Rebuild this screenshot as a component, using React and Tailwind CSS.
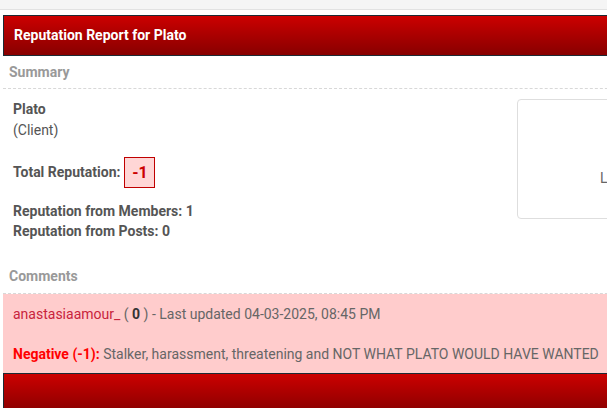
import React from "react";

const Bar = ({ children }) => (
  <div className="h-[41px] border-t border-l border-b border-[#1c2a33] bg-gradient-to-b from-[#cc0000] to-[#880000] flex items-center pl-[10px]">
    {children}
  </div>
);

export default function App() {
  return (
    <div className="w-[607px] h-[408px] overflow-hidden bg-white font-['Roboto',sans-serif] text-[14px] text-[#555]">
      <div className="h-[10px] bg-[#f5f5f5] border-b border-[#e2e2e2]" />
      <div className="w-[640px] ml-[3px] mt-[5px]">
        <Bar>
          <span className="text-white font-bold text-[14px]">Reputation Report for Plato</span>
        </Bar>

        <div className="h-[33px] flex items-center pl-[6px] border-b border-dashed border-[#d8d8d8]">
          <span className="font-bold text-[#999]">Summary</span>
        </div>

        <div className="flex">
          <div className="flex-1 pl-[10px] pt-[10px]">
            <div className="font-bold leading-[21px]">Plato</div>
            <div className="leading-[21px]">(Client)</div>
            <div className="flex items-center mt-[16px] gap-[4px]">
              <span className="font-bold">Total Reputation:</span>
              <span className="w-[31px] h-[31px] border border-[#c00000] bg-[#ffd6d6] text-[#cc0000] font-bold text-[16px] flex items-center justify-center">
                -1
              </span>
            </div>
            <div className="mt-[13px] font-bold leading-[20px]">Reputation from Members: 1</div>
            <div className="font-bold leading-[20px]">Reputation from Posts: 0</div>
          </div>
          <div className="w-[126px] h-[120px] mt-[10px] border border-[#dedede] rounded-[4px] flex items-center pl-[82px] pt-[38px] overflow-hidden">
            <span className="text-[#666]">Loading</span>
          </div>
        </div>

        <div className="h-[34px] mt-[19px] flex items-center pl-[6px] border-b border-dashed border-[#d8d8d8]">
          <span className="font-bold text-[#999]">Comments</span>
        </div>

        <div className="bg-[#ffcccc] h-[79px] pl-[10px] pt-[10px]">
          <div className="leading-[20px] text-[#666]">
            <span className="text-[#c8233c]">anastasiaamour_</span> ( <b className="text-[#333]">0</b> ) - Last updated 04-03-2025, 08:45 PM
          </div>
          <div className="leading-[20px] mt-[20px] text-[#666] whitespace-nowrap">
            <span className="text-[#ff0000] font-bold">Negative (-1):</span> Stalker, harassment, threatening and NOT WHAT PLATO WOULD HAVE WANTED
          </div>
        </div>

        <Bar />
      </div>
    </div>
  );
}
